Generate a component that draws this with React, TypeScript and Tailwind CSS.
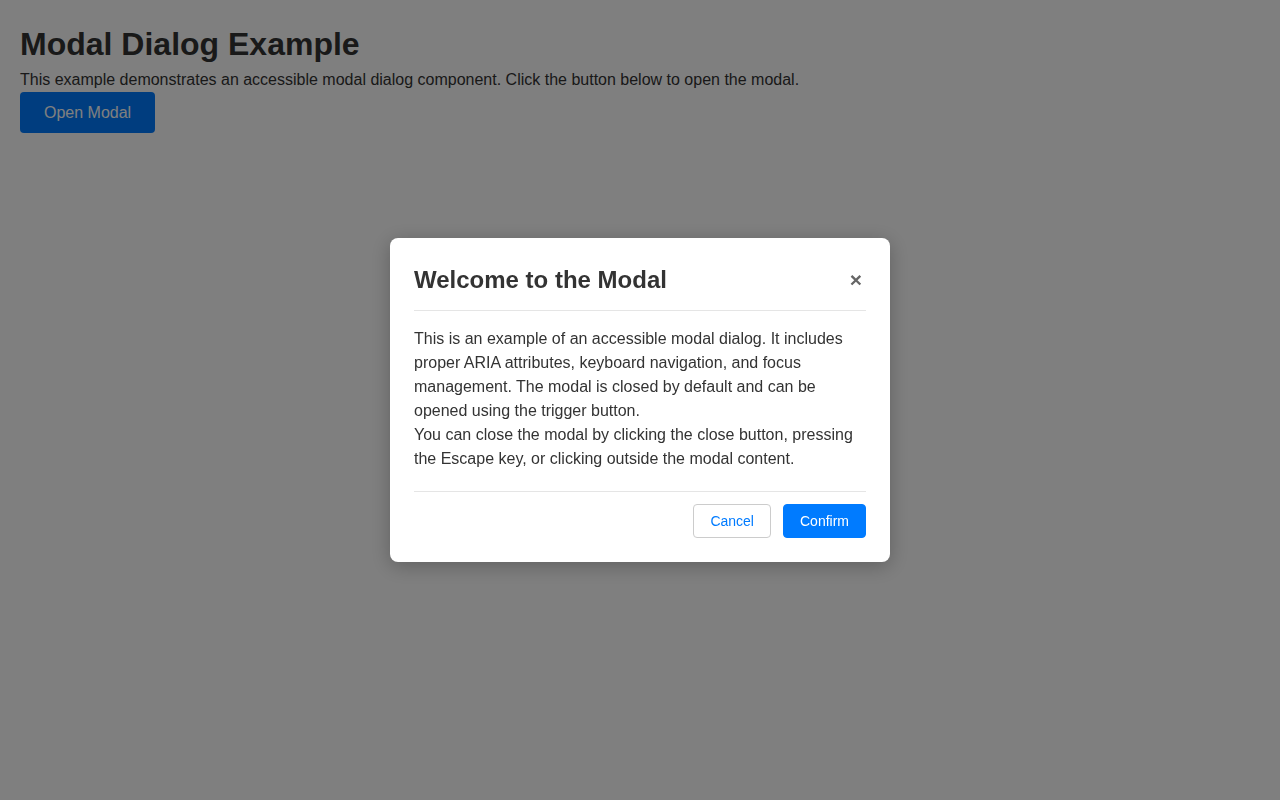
import React from "react";

export default function App() {
  return (
    <div
      className="min-h-screen bg-white p-[20px] text-[#333] leading-[1.5]"
      style={{ fontFamily: '"Liberation Sans", Arial, sans-serif' }}
    >
      <h1 className="m-0 text-[32px] font-bold leading-[48px]">Modal Dialog Example</h1>
      <p className="m-0 text-[16px] leading-[24px]">
        This example demonstrates an accessible modal dialog component. Click the button below to open the modal.
      </p>
      <button className="h-[41px] rounded-[4px] bg-[#007bff] px-[24px] text-[16px] leading-[18px] text-white">
        Open Modal
      </button>

      <div className="fixed inset-0 flex items-center justify-center bg-[rgba(0,0,0,0.5)]">
        <div
          role="dialog"
          aria-modal="true"
          aria-labelledby="modal-title"
          className="w-[500px] rounded-[8px] bg-white p-[24px] shadow-[0_4px_20px_rgba(0,0,0,0.25)]"
        >
          <div className="flex items-center justify-between border-b border-[#e5e5e5] pb-[12px]">
            <h2 id="modal-title" className="m-0 text-[24px] font-bold leading-[36px] text-[#333]">
              Welcome to the Modal
            </h2>
            <button aria-label="Close" className="mr-[4px] text-[21px] font-bold leading-[24px] text-[#666]">
              ×
            </button>
          </div>
          <div className="mb-[20px] mt-[16px] text-[16px] leading-[24px] text-[#333]">
            <p className="m-0">
              This is an example of an accessible modal dialog. It includes proper ARIA attributes, keyboard
              navigation, and focus management. The modal is closed by default and can be opened using the trigger
              button.
            </p>
            <p className="m-0">
              You can close the modal by clicking the close button, pressing the Escape key, or clicking outside the
              modal content.
            </p>
          </div>
          <div className="flex justify-end gap-[12px] border-t border-[#e5e5e5] pt-[12px]">
            <button className="h-[34px] rounded-[4px] border border-[#ccc] bg-white px-[16px] text-[14px] leading-[16px] text-[#007bff]">
              Cancel
            </button>
            <button className="h-[34px] rounded-[4px] border border-[#007bff] bg-[#007bff] px-[16px] text-[14px] leading-[16px] text-white">
              Confirm
            </button>
          </div>
        </div>
      </div>
    </div>
  );
}
